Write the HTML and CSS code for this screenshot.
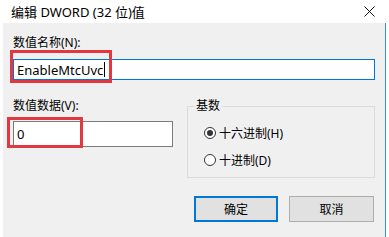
FILE: index.html
```html
<!DOCTYPE html>
<html lang="zh-CN">
<head>
  <meta charset="UTF-8" />
  <title>编辑 DWORD (32 位)值</title>
  <link rel="stylesheet" href="styles.css">
</head>
<body>
  <div class="titlebar">
    <span class="title">编辑 DWORD (32 位)值</span>
    <svg class="close" width="11" height="11" viewBox="0 0 11 11">
      <path d="M0.5 0.5 L10.5 10.5 M10.5 0.5 L0.5 10.5" stroke="#111" stroke-width="1" fill="none" />
    </svg>
  </div>

  <div class="dialog">
    <div class="label">数值名称(N):</div>
    <div class="field name-field">
      <div class="textbox focused">EnableMtcUvc<span class="caret"></span></div>
      <div class="mark mark-name"></div>
    </div>

    <div class="data-row">
      <div class="data-col">
        <div class="label">数值数据(V):</div>
        <div class="field data-field">
          <div class="textbox">0</div>
          <div class="mark mark-data"></div>
        </div>
      </div>

      <fieldset class="group">
        <legend>基数</legend>
        <div class="radios">
          <div class="radio"><span class="dot checked"></span>十六进制(H)</div>
          <div class="radio"><span class="dot"></span>十进制(D)</div>
        </div>
      </fieldset>
    </div>

    <div class="buttons">
      <div class="btn default">确定</div>
      <div class="btn">取消</div>
    </div>
  </div>
</body>
</html>
```

FILE: styles.css
```css
* {
  box-sizing: border-box;
}

html, body {
  margin: 0;
  padding: 0;
  width: 389px;
  height: 237px;
  overflow: hidden;
  background: #fff;
  font-family: "Segoe UI", "Noto Sans", "Noto Sans CJK SC", sans-serif;
  font-size: 12px;
  color: #000;
}

.titlebar {
  height: 23px;
  display: flex;
  align-items: center;
  justify-content: space-between;
  padding: 0 14px 0 11px;
  background: #fff;
}

.title {
  font-size: 13px;
}

.close {
  display: block;
}

.dialog {
  margin-left: 3px;
  width: 383px;
  height: 214px;
  background: #f0f0f0;
  border-right: 1px solid #3b8ed6;
  padding: 12px 10px 0 10px;
}

.label {
  line-height: 16px;
}

.field {
  position: relative;
}

.name-field {
  margin-top: 8px;
  height: 21px;
}

.textbox {
  height: 100%;
  background: #fff;
  border: 1px solid #7a7a7a;
  padding-left: 3px;
  font-size: 13px;
  display: flex;
  align-items: center;
}

.textbox.focused {
  border-color: #0078d7;
}

.caret {
  display: inline-block;
  width: 1px;
  height: 15px;
  background: #000;
  margin-left: 1px;
}

.mark {
  position: absolute;
  border: 3px solid #e2383f;
}

.mark-name {
  left: -3px;
  top: -9px;
  width: 102px;
  height: 33px;
}

.data-row {
  display: flex;
  margin-top: 18px;
}

.data-col {
  width: 160px;
}

.data-field {
  margin-top: 7px;
  height: 26px;
}

.mark-data {
  left: -6px;
  top: -4px;
  width: 76px;
  height: 31px;
}

.group {
  margin: 0 0 0 14px;
  width: 188px;
  padding: 0 0 7px 0;
  border: 1px solid #dcdcdc;
}

.group legend {
  margin-left: 6px;
  padding: 0 2px;
  line-height: 16px;
}

.radios {
  padding: 9px 0 0 16px;
  display: flex;
  flex-direction: column;
  gap: 7px;
}

.radio {
  display: flex;
  align-items: center;
  gap: 3px;
  height: 20px;
}

.dot {
  width: 12px;
  height: 12px;
  border: 1px solid #333;
  border-radius: 50%;
  background: #fff;
  display: flex;
  align-items: center;
  justify-content: center;
}

.dot.checked::after {
  content: "";
  width: 6px;
  height: 6px;
  border-radius: 50%;
  background: #333;
}

.buttons {
  display: flex;
  justify-content: flex-end;
  gap: 11px;
  margin-top: 18px;
  padding-right: 1px;
}

.btn {
  width: 85px;
  height: 26px;
  background: #e1e1e1;
  border: 1px solid #adadad;
  display: flex;
  align-items: center;
  justify-content: center;
}

.btn.default {
  width: 84px;
  border: 2px solid #0078d7;
}
```
